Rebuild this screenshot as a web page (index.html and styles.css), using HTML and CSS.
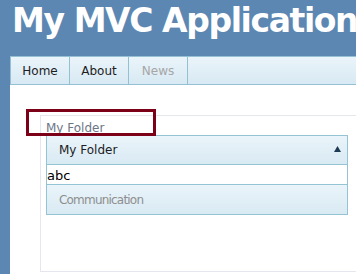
FILE: index.html
```html
<!DOCTYPE html>
<html>
<head>
<meta charset="utf-8">
<link rel="stylesheet" href="styles.css">
</head>
<body>
<div class="page">
  <header class="header"><h1 class="title">My MVC Application</h1></header>
  <nav class="menu">
    <ul class="menu-list">
      <li class="menu-item">Home</li>
      <li class="menu-item">About</li>
      <li class="menu-item menu-item-disabled">News</li>
    </ul>
  </nav>
  <main class="main">
    <div class="highlight"></div>
    <section class="folder-box">
      <div class="folder-label">My Folder</div>
      <div class="accordion">
        <div class="acc-header acc-header-active">
          <span class="acc-title">My Folder</span>
          <svg class="acc-icon" width="7" height="6" viewBox="0 0 7 6"><polygon points="3.5,0 7,6 0,6" fill="#1d3b55"/></svg>
        </div>
        <div class="acc-content">abc</div>
        <div class="acc-header acc-header-disabled"><span class="acc-title">Communication</span></div>
      </div>
    </section>
  </main>
</div>
</body>
</html>
```
FILE: styles.css
```css
html, body {
  margin: 0;
  height: 100%;
}
body {
  background: #5c87b2;
  font-family: "DejaVu Sans", Verdana, sans-serif;
  overflow: hidden;
}
.page {
  width: 356px;
  height: 274px;
  overflow: hidden;
}
.header {
  height: 56px;
  overflow: hidden;
}
.title {
  margin: 0;
  padding: 1px 0 0 12px;
  font-size: 33px;
  line-height: 40px;
  font-weight: bold;
  letter-spacing: -1.4px;
  color: #fff;
  white-space: nowrap;
}
.menu {
  margin-left: 10px;
  height: 27px;
  border: 1px solid #93c0d2;
  border-right: none;
  background: linear-gradient(#eaf4fa, #d8e9f3);
}
.menu-list {
  display: flex;
  margin: 0;
  padding: 0;
  list-style: none;
}
.menu-item {
  width: 58px;
  text-align: center;
  padding-top: 1px;
  height: 26px;
  line-height: 26px;
  font-size: 12px;
  color: #1c1c24;
  border-right: 1px solid #93c0d2;
}
.menu-item-disabled {
  color: #a6a6a6;
}
.main {
  position: relative;
  margin-left: 10px;
  height: 189px;
  background: #fff;
  padding: 30px 0 0 30px;
  box-sizing: border-box;
}
.highlight {
  position: absolute;
  left: 16px;
  top: 24px;
  width: 130px;
  height: 27px;
  border: 3px solid #7d0019;
  box-sizing: border-box;
  z-index: 2;
}
.folder-box {
  width: 400px;
  height: 157px;
  border: 1px solid #e4e8ee;
  box-sizing: border-box;
  padding: 5px 0 0 5px;
}
.folder-label {
  font-size: 12px;
  line-height: 14px;
  color: #6d7686;
}
.accordion {
  width: 302px;
}
.acc-header {
  display: flex;
  align-items: center;
  justify-content: space-between;
  height: 28px;
  padding: 0 6px 0 12px;
  border: 1px solid #94c4d4;
  background: linear-gradient(#eaf4fa, #d9eaf3);
  font-size: 12px;
  color: #1c1c24;
}
.acc-icon {
  margin-top: -2px;
}
.acc-content {
  height: 19px;
  box-sizing: border-box;
  padding-top: 2px;
  line-height: 17px;
  font-size: 13px;
  color: #000;
  background: #fff;
  border-left: 1px solid #94c4d4;
  border-right: 1px solid #94c4d4;
}
.acc-header-disabled {
  height: 29px;
  font-size: 12px;
  letter-spacing: -0.8px;
  color: #8e8e8e;
}
```
